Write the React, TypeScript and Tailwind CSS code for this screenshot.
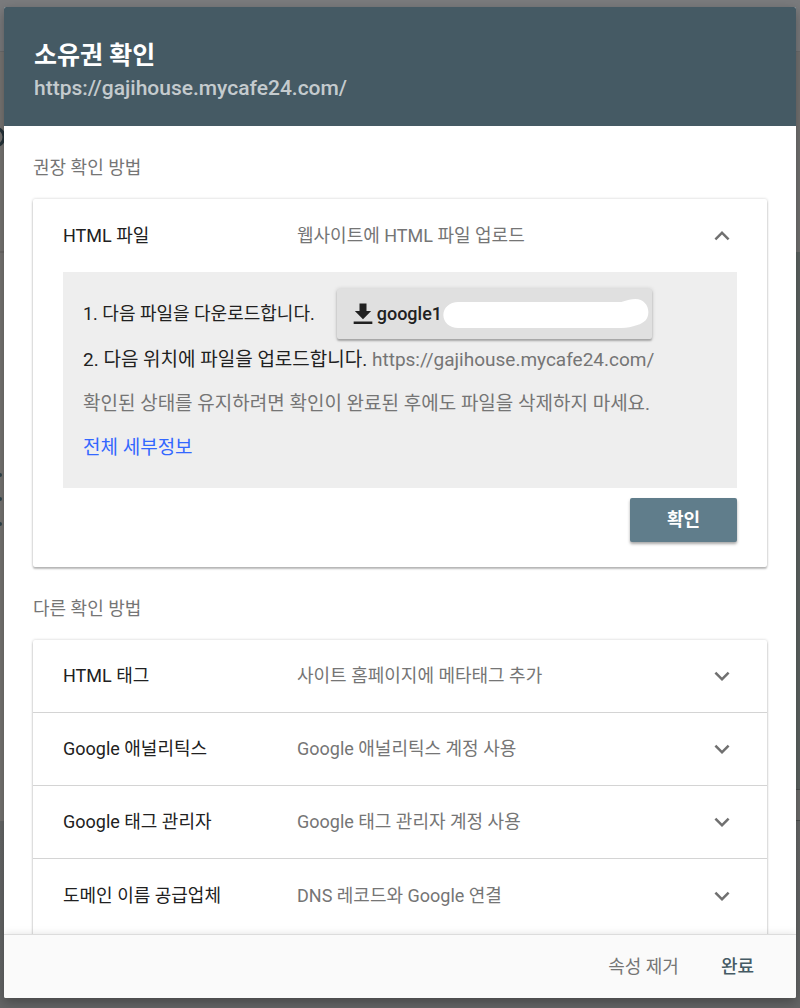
import { useState } from "react";

interface VerificationMethod {
  name: string;
  description: string;
}

const SITE_URL = "https://gajihouse.mycafe24.com/";

const otherMethods: VerificationMethod[] = [
  { name: "HTML 태그", description: "사이트 홈페이지에 메타태그 추가" },
  { name: "Google 애널리틱스", description: "Google 애널리틱스 계정 사용" },
  { name: "Google 태그 관리자", description: "Google 태그 관리자 계정 사용" },
  { name: "도메인 이름 공급업체", description: "DNS 레코드와 Google 연결" },
];

const cardClass =
  "rounded-xs bg-white shadow-[0_2px_2px_rgba(0,0,0,0.24),0_0_3px_rgba(0,0,0,0.2)]";

// Dimmed page behind the dialog, only its edges show
function Backdrop() {
  return (
    <div className="absolute inset-0 flex flex-col" aria-hidden="true">
      <div className="h-[52px] border-b border-[#6b6c6d] bg-[#7a7b7d]" />
      <div className="flex-1 flex justify-between">
        <div className="w-1/2 bg-[#777573]">
          <svg viewBox="0 0 4 500" className="w-1 h-[500px]">
            <circle cx="-5" cy="85" r="9" fill="none" stroke="#26343a" strokeWidth="3" />
            <path d="M0 200h4M0 504h4" stroke="#62615f" />
            <g fill="#2f444c">
              <circle cx="0" cy="423" r="2" />
              <circle cx="0" cy="447" r="2" />
              <circle cx="0" cy="472" r="2" />
            </g>
          </svg>
        </div>
        <div className="w-1/2 flex flex-col">
          <div className="h-[200px] bg-[#737271]" />
          <div className="flex-1 bg-[#5c6361]" />
          <div className="h-8 border-y border-[#4c4f4e] bg-[#6e6d6c]" />
        </div>
      </div>
      <div className="h-[187px] bg-linear-to-b from-[#666868] to-[#646566]" />
    </div>
  );
}

function Chevron({ up = false }: { up?: boolean }) {
  return (
    <svg viewBox="0 0 24 24" className="w-[30px] h-[30px] flex-shrink-0 fill-[#707070]" aria-hidden="true">
      {up ? (
        <path d="M12 8l-6 6 1.41 1.41L12 10.83l4.59 4.58L18 14z" />
      ) : (
        <path d="M16.59 8.59L12 13.17 7.41 8.59 6 10l6 6 6-6z" />
      )}
    </svg>
  );
}

function MethodRow({
  method,
  open = false,
  onClick,
}: {
  method: VerificationMethod;
  open?: boolean;
  onClick?: () => void;
}) {
  return (
    <button
      type="button"
      onClick={onClick}
      aria-expanded={open}
      className="w-full h-[73px] px-[30px] flex items-center text-left text-lg leading-6"
    >
      <span className="w-[234px] flex-shrink-0 text-[#212121]">{method.name}</span>
      <span className="flex-1 min-w-0 text-[#757575]">{method.description}</span>
      <Chevron up={open} />
    </button>
  );
}

function DownloadButton() {
  return (
    <button
      type="button"
      className="h-[50px] w-[315px] pl-3 pr-[2px] flex items-center rounded-xs bg-[#e0e0e0] text-lg font-medium text-[#212121] shadow-[0_2px_2px_rgba(0,0,0,0.26),0_0_4px_rgba(0,0,0,0.16)]"
    >
      <svg viewBox="0 0 24 24" className="w-7 h-7 flex-shrink-0 fill-[#212121]" aria-hidden="true">
        <path d="M19 9.5h-4V3H9v6.5H5l7 7 7-7zM4 18.5v2h16v-2H4z" />
      </svg>
      google1
      <svg viewBox="0 0 205 30" className="flex-1 min-w-0 h-[30px] fill-white" aria-hidden="true">
        <path d="M15 3H178C184 1 188 0 192 0C200 0 205 6 205 13C205 20 201 24 194 26C188 28 184 29 178 29H15C6 29 0 23 0 16C0 9 6 3 15 3Z" />
      </svg>
    </button>
  );
}

export default function App() {
  const [open, setOpen] = useState(true);

  return (
    <div className="relative h-screen px-1 pt-[7px] pb-[10px] font-[Roboto,'Noto_Sans_CJK_KR',sans-serif]">
      <Backdrop />
      <div
        role="dialog"
        aria-labelledby="dialog-title"
        className="relative h-full flex flex-col overflow-hidden rounded-xs bg-white shadow-[0_4px_12px_rgba(0,0,0,0.3)]"
      >
        <header className="h-[119px] flex-shrink-0 px-[30px] pt-8 bg-[#455a64]">
          <h1 id="dialog-title" className="text-[25px] leading-[34px] font-bold text-white">
            소유권 확인
          </h1>
          <p className="text-[21px] leading-[30px] font-medium text-white/70">{SITE_URL}</p>
        </header>

        <main className="flex-1 min-h-0 overflow-y-auto [scrollbar-width:none] px-[29px]">
          <h2 className="h-[73px] pt-[30px] text-lg leading-6 text-[#757575]">권장 확인 방법</h2>
          <section className={cardClass}>
            <MethodRow
              method={{ name: "HTML 파일", description: "웹사이트에 HTML 파일 업로드" }}
              open={open}
              onClick={() => setOpen(!open)}
            />
            {open && (
              <div className="px-[30px] pb-[25px]">
                <div className="px-5 pt-[17px] pb-7 bg-[#eee] text-[19px] leading-6 text-[#757575]">
                  <ol className="text-[#212121]">
                    <li className="flex items-center gap-[22px] text-lg">
                      1. 다음 파일을 다운로드합니다.
                      <DownloadButton />
                    </li>
                    <li className="mt-[9px]">
                      2. 다음 위치에 파일을 업로드합니다. <span className="text-[#757575]">{SITE_URL}</span>
                    </li>
                  </ol>
                  <p className="mt-5">확인된 상태를 유지하려면 확인이 완료된 후에도 파일을 삭제하지 마세요.</p>
                  <a href="#details" className="mt-5 block w-fit text-[#3367ff]">
                    전체 세부정보
                  </a>
                </div>
                <div className="mt-[10px] flex justify-end">
                  <button
                    type="button"
                    className="h-11 w-[107px] rounded-xs bg-[#607d8b] text-lg font-bold text-white shadow-[0_2px_3px_rgba(0,0,0,0.35)]"
                  >
                    확인
                  </button>
                </div>
              </div>
            )}
          </section>

          <h2 className="h-[73px] pt-[30px] text-lg leading-6 text-[#757575]">다른 확인 방법</h2>
          <section className={`${cardClass} pb-1 divide-y divide-[#d4d4d4]`}>
            {otherMethods.map((method) => (
              <MethodRow key={method.name} method={method} />
            ))}
          </section>
        </main>

        <footer className="relative h-16 flex-shrink-0 px-[42px] flex items-center justify-end gap-[42px] border-t border-[#dcdcdc] bg-[#fafafa] text-lg shadow-[0_0_8px_rgba(0,0,0,0.12)]">
          <button type="button" className="text-[#757575]">
            속성 제거
          </button>
          <button type="button" className="font-medium text-[#455a64]">
            완료
          </button>
        </footer>
      </div>
    </div>
  );
}
